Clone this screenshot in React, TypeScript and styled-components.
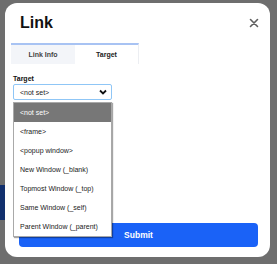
import { FC } from 'react';
import styled, { createGlobalStyle } from 'styled-components';

const Global = createGlobalStyle`
*{box-sizing:border-box;}
html,body{margin:0;padding:0;}
body{
  background:#6e6e6e;
  font-family:"Liberation Sans", Arial, sans-serif;
  width:277px;
  height:264px;
  overflow:hidden;
}
`

const Screen = styled.div`
position: relative;
width: 277px;
height: 264px;
padding-top: 185px;
.behind{
  width: 5px;
  height: 35px;
  background: #12306e;
}
`

const Modal = styled.div`
position: absolute;
left: 5px;
top: 3px;
width: 265px;
height: 254px;
background: #fff;
border-radius: 12px;
display: flex;
flex-direction: column;
padding: 8px 0 10px;
`

const Header = styled.div`
display: flex;
align-items: center;
justify-content: space-between;
height: 24px;
padding: 0 11px 0 15px;
.title{
  font: 700 16px "Liberation Sans", Arial, sans-serif;
  color: #111;
}
.close{
  width: 10px;
  height: 10px;
  display: flex;
  color: #5f5f5f;
}
`

const Tabs = styled.div`
display: flex;
margin: 8px 0 0 6px;
`

const Tab = styled.div<{ $active?: boolean }>`
width: 64px;
height: 21px;
border-top: 2px solid #a8c3f3;
border-right: ${p => (p.$active ? '1px solid #eceef2' : 'none')};
background: ${p => (p.$active ? '#fff' : '#f3f5f9')};
display: flex;
align-items: center;
justify-content: center;
font: 700 7px "Liberation Sans", Arial, sans-serif;
color: ${p => (p.$active ? '#222' : '#444')};
`

const Field = styled.div`
position: relative;
margin: 9px 0 0 8px;
width: 99px;
.label{
  font: 700 7px/11px "Liberation Sans", Arial, sans-serif;
  color: #111;
}
`

const Select = styled.div`
height: 16px;
border: 1px solid #8fc6f6;
border-radius: 2px;
display: flex;
align-items: center;
justify-content: space-between;
padding: 0 4px 0 6px;
font: 400 7px "Liberation Sans", Arial, sans-serif;
color: #222;
svg{display:block;}
`

const Dropdown = styled.ul`
position: absolute;
top: 29px;
left: 0;
width: 99px;
margin: 0;
padding: 0;
list-style: none;
background: #fff;
border: 1px solid #a9a9a9;
box-shadow: 1px 1px 1px rgba(0,0,0,0.35);
z-index: 2;
`

const Option = styled.li<{ $selected?: boolean }>`
height: 19px;
display: flex;
align-items: center;
padding-left: 6px;
font: 400 7px "Liberation Sans", Arial, sans-serif;
background: ${p => (p.$selected ? '#777' : 'transparent')};
color: ${p => (p.$selected ? '#fff' : '#222')};
`

const Submit = styled.button`
margin: auto 12px 0 14px;
height: 24px;
border: none;
border-radius: 4px;
background: #1a62f7;
color: #fff;
font: 700 8.5px "Liberation Sans", Arial, sans-serif;
`

const options = [
  '<not set>',
  '<frame>',
  '<popup window>',
  'New Window (_blank)',
  'Topmost Window (_top)',
  'Same Window (_self)',
  'Parent Window (_parent)',
]

const App: FC = () => {
  return (
    <>
      <Global />
      <Screen>
        <div className="behind" />
        <Modal>
          <Header>
            <span className="title">Link</span>
            <span className="close">
              <svg width="10" height="10" viewBox="0 0 10 10">
                <path d="M1.5 1.5L8.5 8.5M8.5 1.5L1.5 8.5" stroke="currentColor" strokeWidth="1.6" strokeLinecap="round" />
              </svg>
            </span>
          </Header>
          <Tabs>
            <Tab>Link Info</Tab>
            <Tab $active>Target</Tab>
          </Tabs>
          <Field>
            <div className="label">Target</div>
            <Select>
              <span>&lt;not set&gt;</span>
              <svg width="8" height="6" viewBox="0 0 8 6">
                <path d="M1 1.5L4 4.5L7 1.5" fill="none" stroke="#111" strokeWidth="1.8" />
              </svg>
            </Select>
            <Dropdown>
              {options.map((o, i) => (
                <Option key={o} $selected={i === 0}>{o}</Option>
              ))}
            </Dropdown>
          </Field>
          <Submit>Submit</Submit>
        </Modal>
      </Screen>
    </>
  )
}

export default App
